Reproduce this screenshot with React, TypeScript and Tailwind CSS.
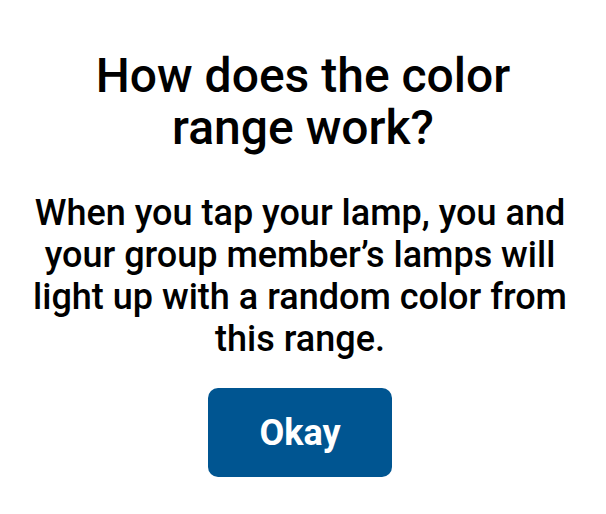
export default function App() {
  return (
    <div className="w-[606px] h-[514px] bg-white flex flex-col items-center pt-[50px] font-['Roboto',sans-serif] text-black">
      <h1 className="text-[48px] leading-[52px] font-medium text-center w-[500px]">
        How does the color range work?
      </h1>
      <p className="mt-[38px] mr-[6px] text-[36px] leading-[42px] font-medium text-center w-[570px]">
        When you tap your lamp, you and your group member’s lamps will light up with a random color from this range.
      </p>
      <button className="mt-[28px] mr-[6px] w-[184px] h-[89px] rounded-[10px] bg-[#005591] text-white text-[36px] font-bold">
        Okay
      </button>
    </div>
  );
}
